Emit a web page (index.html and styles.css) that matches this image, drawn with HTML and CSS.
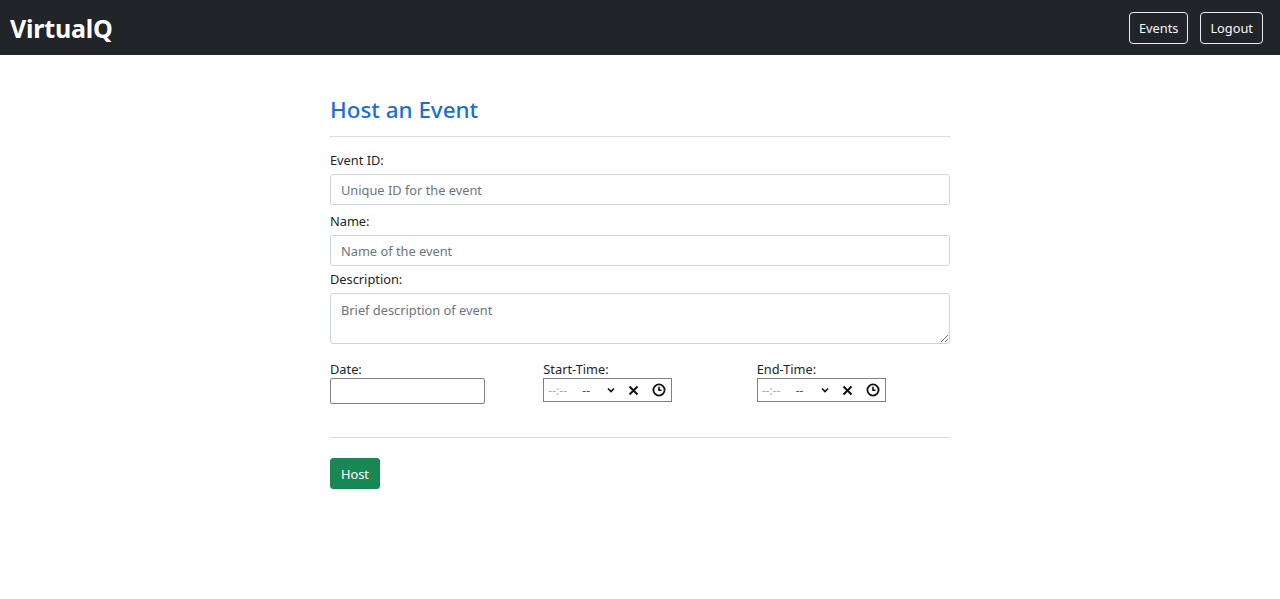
FILE: index.html
```html
<!DOCTYPE html>
<html lang="en">
<head>
<meta charset="utf-8">
<title>VirtualQ</title>
<link rel="stylesheet" href="styles.css">
</head>
<body>
<nav class="navbar">
  <a class="brand" href="#">VirtualQ</a>
  <div class="nav-actions">
    <button class="btn-outline">Events</button>
    <button class="btn-outline">Logout</button>
  </div>
</nav>
<main class="container">
  <h3 class="title">Host an Event</h3>
  <hr class="rule">
  <form class="form">
    <label class="label" for="eid">Event ID:</label>
    <input class="control" id="eid" type="text" placeholder="Unique ID for the event">
    <label class="label" for="ename">Name:</label>
    <input class="control control-tight" id="ename" type="text" placeholder="Name of the event">
    <label class="label" for="edesc">Description:</label>
    <textarea class="control area" id="edesc" placeholder="Brief description of event"></textarea>
    <div class="row">
      <div class="col">
        <label class="label">Date:</label>
        <input class="date" type="text">
      </div>
      <div class="col">
        <label class="label">Start-Time:</label>
        <div class="time">
          <span class="time-ph">--:--</span><span class="time-ap">--</span>
          <svg class="chev" width="8" height="6" viewBox="0 0 8 6"><path d="M1 1.5 L4 4.5 L7 1.5" fill="none" stroke="#111" stroke-width="1.6"/></svg>
          <svg class="x" width="11" height="11" viewBox="0 0 11 11"><path d="M1.5 1.5 L9.5 9.5 M9.5 1.5 L1.5 9.5" stroke="#111" stroke-width="2"/></svg>
          <svg class="clock" width="14" height="14" viewBox="0 0 14 14"><circle cx="7" cy="7" r="5.6" fill="none" stroke="#111" stroke-width="1.8"/><path d="M7 3.8 V7.2 H9.6" fill="none" stroke="#111" stroke-width="1.6"/></svg>
        </div>
      </div>
      <div class="col">
        <label class="label">End-Time:</label>
        <div class="time">
          <span class="time-ph">--:--</span><span class="time-ap">--</span>
          <svg class="chev" width="8" height="6" viewBox="0 0 8 6"><path d="M1 1.5 L4 4.5 L7 1.5" fill="none" stroke="#111" stroke-width="1.6"/></svg>
          <svg class="x" width="11" height="11" viewBox="0 0 11 11"><path d="M1.5 1.5 L9.5 9.5 M9.5 1.5 L1.5 9.5" stroke="#111" stroke-width="2"/></svg>
          <svg class="clock" width="14" height="14" viewBox="0 0 14 14"><circle cx="7" cy="7" r="5.6" fill="none" stroke="#111" stroke-width="1.8"/><path d="M7 3.8 V7.2 H9.6" fill="none" stroke="#111" stroke-width="1.6"/></svg>
        </div>
      </div>
    </div>
    <hr class="rule rule-bottom">
    <button class="btn-host" type="button">Host</button>
  </form>
</main>
</body>
</html>
```
FILE: styles.css
```css
* { box-sizing: border-box; }
body {
  margin: 0;
  font-family: "Noto Sans", "Open Sans", sans-serif;
  font-size: 12.8px;
  color: #212529;
  background: #fff;
}
.navbar {
  height: 55px;
  background: #212529;
  display: flex;
  align-items: center;
  justify-content: space-between;
  padding: 0 17px 0 10px;
}
.brand {
  color: #fff;
  text-decoration: none;
  font-weight: 700;
  font-size: 25px;
  letter-spacing: -0.2px;
}
.nav-actions { display: flex; gap: 12px; }
.btn-outline {
  font-family: inherit;
  font-size: 12.8px;
  color: #f8f9fa;
  background: transparent;
  border: 1px solid #e9ecef;
  border-radius: 4px;
  height: 32px;
  padding: 0 9px;
}
.container {
  width: 640px;
  margin: 0 auto;
  padding: 0 10px;
}
.title {
  margin: 41px 0 0;
  font-size: 22.4px;
  font-weight: 500;
  color: #1a6fd4;
  line-height: 27px;
}
.rule {
  border: 0;
  border-top: 1px solid #dcdcdc;
  margin: 13px 0 14px;
}
.form { display: flex; flex-direction: column; }
.label {
  display: block;
  line-height: 19px;
  margin-bottom: 4px;
}
.control {
  font-family: inherit;
  font-size: 12.8px;
  color: #212529;
  height: 31px;
  border: 1px solid #ced4da;
  border-radius: 3px;
  padding: 0 10px;
  margin-bottom: 7px;
  width: 100%;
}
.control-tight { margin-bottom: 4px; }
.control::placeholder { color: #6c757d; }
.area {
  height: 51px;
  padding-top: 7px;
  resize: vertical;
  margin-bottom: 16px;
}
.row {
  display: flex;
  margin: 0 -10px;
}
.col {
  flex: 1 1 0;
  padding: 0 10px;
}
.col .label { margin-bottom: 0; line-height: 18px; }
.date {
  width: 155px;
  height: 26px;
  border: 1px solid #808080;
  border-radius: 2px;
  padding: 0 4px;
  font-family: inherit;
}
.time {
  width: 129px;
  height: 24px;
  border: 1px solid #808080;
  display: flex;
  align-items: center;
  padding: 0 4px;
  color: #999;
}
.time-ph { width: 34px; color: #aaa; font-size: 12px; }
.time-ap { width: 25px; color: #555; font-size: 12px; }
.chev { margin-right: 13px; }
.x { margin-right: 13px; }
.rule-bottom { margin: 33px 0 20px; }
.btn-host {
  align-self: flex-start;
  font-family: inherit;
  font-size: 12.8px;
  color: #fff;
  background: #198754;
  border: 1px solid #198754;
  border-radius: 3px;
  height: 31px;
  padding: 0 10px;
}
```
